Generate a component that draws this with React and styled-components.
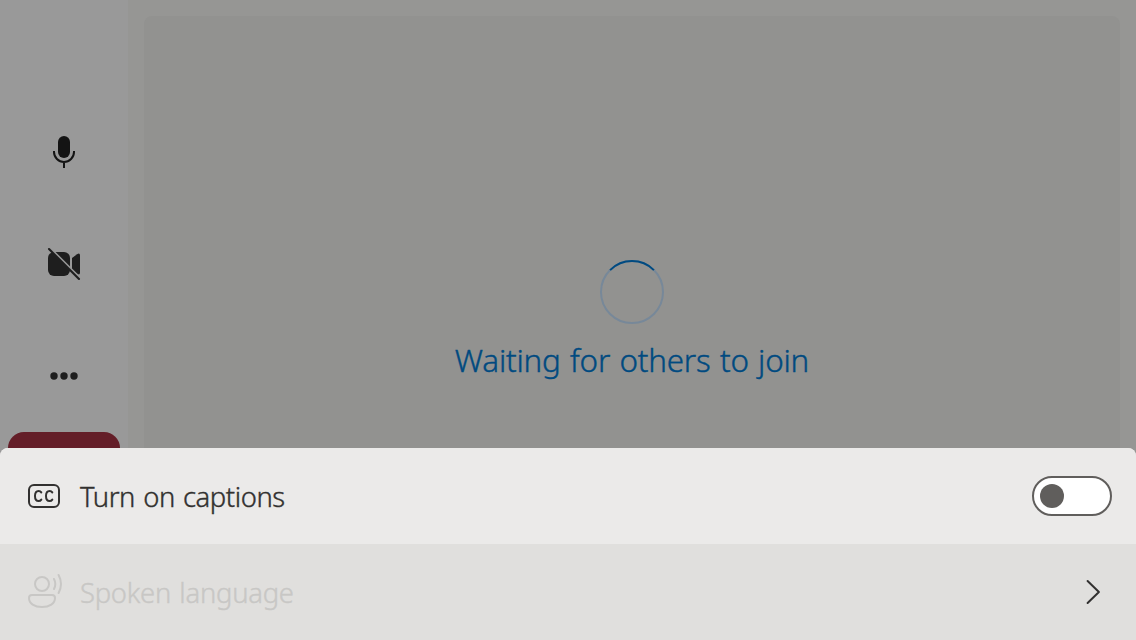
import React from "react";
import styled, { createGlobalStyle } from "styled-components";

const GlobalStyle = createGlobalStyle`
  * { box-sizing: border-box; }
  body {
    margin: 0;
    overflow: hidden;
    font-family: "Noto Sans", "Open Sans", sans-serif;
    font-weight: 300;
    -webkit-text-stroke: 0.4px currentColor;
  }
`;

const Screen = styled.div`
  position: relative;
  display: flex;
  width: 1136px;
  height: 640px;
  overflow: hidden;
  background: #969694;
`;

const Sidebar = styled.nav`
  display: flex;
  flex-direction: column;
  justify-content: center;
  align-items: center;
  width: 128px;
  background: #999999;
`;

const CallButton = styled.button`
  display: flex;
  align-items: center;
  justify-content: center;
  width: 112px;
  height: 112px;
  padding: 0;
  border: 0;
  border-radius: 16px;
  color: #1e1e1e;
  background: ${(p) => (p.$danger ? "#641e28" : "transparent")};
`;

const Stage = styled.main`
  flex: 1;
  display: flex;
  padding: 16px;
`;

const VideoArea = styled.section`
  flex: 1;
  display: flex;
  flex-direction: column;
  align-items: center;
  padding-top: 244px;
  border-radius: 8px;
  background: #929290;
`;

const WaitingText = styled.div`
  margin-top: 14px;
  font-size: 31.4px;
  line-height: 44px;
  letter-spacing: -0.2px;
  word-spacing: 1.4px;
  color: #004a80;
  white-space: nowrap;
`;

const Sheet = styled.div`
  position: absolute;
  left: 0;
  right: 0;
  bottom: 0;
  overflow: hidden;
  border-radius: 8px 8px 0 0;
  background: #ebeae9;
`;

const MenuRow = styled.div`
  display: flex;
  align-items: center;
  height: 96px;
  padding: 0 24px;
  color: ${(p) => (p.$disabled ? "#c8c7c5" : "#323130")};
  background: ${(p) => (p.$disabled ? "#e0dfdd" : "#ebeae9")};
`;

const RowIcon = styled.span`
  display: flex;
  width: 40px;
  height: 40px;
  margin-right: 16px;
`;

const RowLabel = styled.span`
  flex: 1;
  padding-top: 1px;
  font-size: 27.4px;
  line-height: 40px;
  letter-spacing: ${(p) => p.$tracking};
  word-spacing: 1.5px;
  white-space: nowrap;
`;

const Toggle = styled.span`
  display: flex;
  align-items: center;
  width: 80px;
  height: 40px;
  padding-left: 6px;
  border: 2px solid #605e5c;
  border-radius: 20px;
  background: #ffffff;
`;

const Knob = styled.span`
  width: 24px;
  height: 24px;
  border-radius: 50%;
  background: #605e5c;
`;

const MicIcon = () => (
  <svg width="40" height="40" viewBox="0 0 40 40" fill="none">
    <rect x="14" y="4" width="12" height="22" rx="6" fill="#141414" />
    <path d="M10 19v1a10 10 0 0 0 20 0v-1M20 30v6" stroke="#141414" strokeWidth="2" />
  </svg>
);

const VideoOffIcon = () => (
  <svg width="40" height="40" viewBox="0 0 40 40" fill="none">
    <rect x="4" y="8" width="22" height="24" rx="6" fill="currentColor" />
    <path d="M28 14l5.100-3.800Q36 8.300 36 11.500v17Q36 31.700 33.100 29.800L28 26z" fill="currentColor" />
    <path d="M6.200 4.300l31 31" stroke="#999999" strokeWidth="2.400" />
    <path d="M5 5l30 30" stroke="currentColor" strokeWidth="2.100" strokeLinecap="round" />
  </svg>
);

const MoreIcon = () => (
  <svg width="40" height="40" viewBox="0 0 40 40" fill="currentColor">
    <circle cx="10" cy="20" r="3.700" />
    <circle cx="20" cy="20" r="3.700" />
    <circle cx="30" cy="20" r="3.700" />
  </svg>
);

const Spinner = () => (
  <svg width="64" height="64" viewBox="0 0 64 64" fill="none" strokeWidth="2">
    <circle cx="32" cy="32" r="31" stroke="#778899" />
    <path d="M10.100 10.100a31 31 0 0 1 43.800 0" stroke="#004a80" />
  </svg>
);

const CaptionsIcon = () => (
  <svg width="40" height="40" viewBox="0 0 40 40" fill="none" stroke="currentColor" strokeWidth="2">
    <rect x="5" y="9" width="30" height="22" rx="5" />
    <path d="M17.300 16.400C16.700 15.500 15.700 15 14.600 15c-2.300 0-3.600 2-3.600 5s1.300 5 3.600 5c1.100 0 2.100-.5 2.700-1.400M28.300 16.400C27.700 15.500 26.700 15 25.600 15c-2.300 0-3.600 2-3.600 5s1.300 5 3.600 5c1.100 0 2.100-.5 2.700-1.400" strokeLinecap="round" />
  </svg>
);

const SpokenIcon = () => (
  <svg width="40" height="40" viewBox="0 0 40 40" fill="none" stroke="currentColor" strokeWidth="2">
    <circle cx="18" cy="12" r="7" />
    <path d="M8 23h20a3 3 0 0 1 3 3c0 5.500-5.500 9-13 9S5 31.500 5 26a3 3 0 0 1 3-3z" />
    <path d="M30 7q2.600 5 0 10M34.600 3q4.800 9 0 18" strokeLinecap="round" />
  </svg>
);

const Chevron = () => (
  <svg width="40" height="40" viewBox="0 0 40 40" fill="none">
    <path d="M15.600 9l11.300 11-11.300 11" stroke="#323130" strokeWidth="2" strokeLinecap="round" strokeLinejoin="round" />
  </svg>
);

export default function App() {
  return (
    <>
      <GlobalStyle />
      <Screen>
        <Sidebar>
          <CallButton><MicIcon /></CallButton>
          <CallButton><VideoOffIcon /></CallButton>
          <CallButton><MoreIcon /></CallButton>
          <CallButton $danger />
        </Sidebar>
        <Stage>
          <VideoArea>
            <Spinner />
            <WaitingText>Waiting for others to join</WaitingText>
          </VideoArea>
        </Stage>
        <Sheet>
          <MenuRow>
            <RowIcon><CaptionsIcon /></RowIcon>
            <RowLabel $tracking="-0.42px">Turn on captions</RowLabel>
            <Toggle><Knob /></Toggle>
          </MenuRow>
          <MenuRow $disabled>
            <RowIcon><SpokenIcon /></RowIcon>
            <RowLabel $tracking="-0.25px">Spoken language</RowLabel>
            <Chevron />
          </MenuRow>
        </Sheet>
      </Screen>
    </>
  );
}
